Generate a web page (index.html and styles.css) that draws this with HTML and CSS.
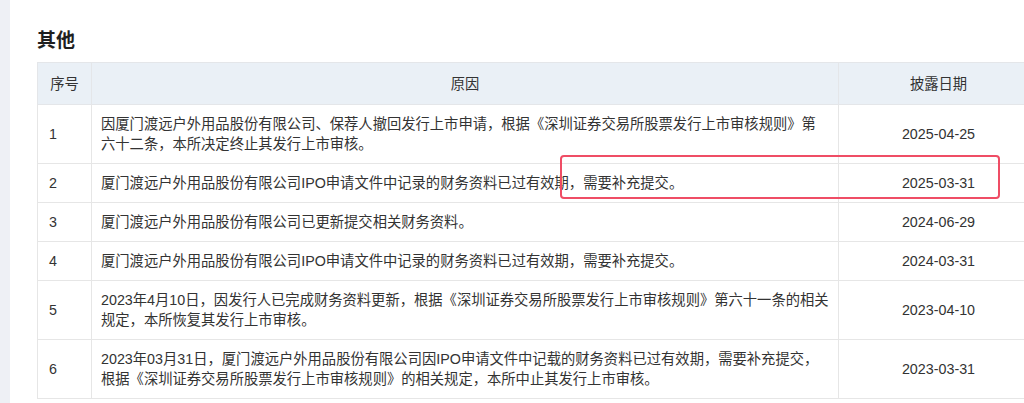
FILE: index.html
```html
<!DOCTYPE html>
<html lang="zh-CN">
<head>
<meta charset="utf-8">
<title>其他</title>
<link rel="stylesheet" href="styles.css">
</head>
<body>
<div class="page">
  <div class="side"></div>
  <main class="main">
    <h2 class="title">其他</h2>
    <div class="table-wrap">
      <table class="tbl">
        <colgroup>
          <col class="c-no">
          <col class="c-reason">
          <col class="c-date">
        </colgroup>
        <thead>
          <tr><th>序号</th><th>原因</th><th>披露日期</th></tr>
        </thead>
        <tbody>
          <tr>
            <td class="no">1</td>
            <td>因厦门渡远户外用品股份有限公司、保荐人撤回发行上市申请，根据《深圳证券交易所股票发行上市审核规则》第<br>六十二条，本所决定终止其发行上市审核。</td>
            <td class="date">2025-04-25</td>
          </tr>
          <tr>
            <td class="no">2</td>
            <td>厦门渡远户外用品股份有限公司IPO申请文件中记录的财务资料已过有效期，需要补充提交。</td>
            <td class="date">2025-03-31</td>
          </tr>
          <tr>
            <td class="no">3</td>
            <td>厦门渡远户外用品股份有限公司已更新提交相关财务资料。</td>
            <td class="date">2024-06-29</td>
          </tr>
          <tr>
            <td class="no">4</td>
            <td>厦门渡远户外用品股份有限公司IPO申请文件中记录的财务资料已过有效期，需要补充提交。</td>
            <td class="date">2024-03-31</td>
          </tr>
          <tr>
            <td class="no">5</td>
            <td>2023年4月10日，因发行人已完成财务资料更新，根据《深圳证券交易所股票发行上市审核规则》第六十一条的相关<br>规定，本所恢复其发行上市审核。</td>
            <td class="date">2023-04-10</td>
          </tr>
          <tr>
            <td class="no">6</td>
            <td>2023年03月31日，厦门渡远户外用品股份有限公司因IPO申请文件中记载的财务资料已过有效期，需要补充提交，<br>根据《深圳证券交易所股票发行上市审核规则》的相关规定，本所中止其发行上市审核。</td>
            <td class="date">2023-03-31</td>
          </tr>
        </tbody>
      </table>
      <div class="highlight"></div>
    </div>
  </main>
</div>
</body>
</html>
```

FILE: styles.css
```css
html, body {
  margin: 0;
  padding: 0;
  background: #ffffff;
  overflow: hidden;
}
body {
  font-family: "Liberation Sans", "Noto Sans CJK SC", sans-serif;
  color: #333333;
  width: 1024px;
  height: 403px;
}
.page {
  display: flex;
  height: 403px;
}
.side {
  flex: 0 0 10px;
  background: #eef0f5;
}
.main {
  flex: 0 0 auto;
  padding-left: 27px;
  padding-top: 28px;
}
.title {
  margin: 0 0 8px 0;
  font-size: 19px;
  line-height: 26px;
  font-weight: bold;
  color: #1f1f1f;
}
.table-wrap {
  position: relative;
  width: 1001px;
}
.tbl {
  width: 1001px;
  border-collapse: collapse;
  table-layout: fixed;
  font-size: 14.3px;
  line-height: 20px;
  border: 1px solid #e4e6e9;
}
.c-no { width: 54px; }
.c-reason { width: 747px; }
.c-date { width: 200px; }
.tbl th {
  background: #eaf0f6;
  font-weight: normal;
  color: #333333;
  height: 41px;
  padding: 0;
  text-align: center;
  border: 1px solid #e4e6e9;
}
.tbl td {
  padding: 9px 9px;
  border: 1px solid #e6e6e6;
  vertical-align: middle;
  text-align: left;
  white-space: nowrap;
}
.tbl td.no {
  padding-left: 11px;
}
.tbl td.date {
  text-align: center;
}
.highlight {
  position: absolute;
  left: 523px;
  top: 93px;
  width: 436px;
  height: 40px;
  border: 2px solid #ef4d65;
  border-radius: 4px;
}
```
